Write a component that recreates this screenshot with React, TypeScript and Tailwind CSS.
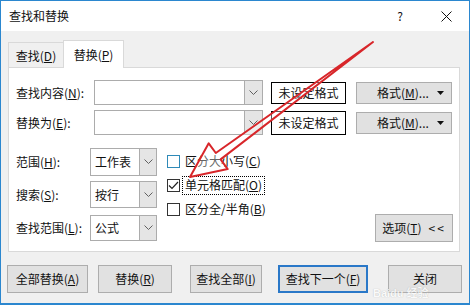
import React from "react";

const font = { fontFamily: '"Noto Sans CJK SC", "Noto Sans", sans-serif' };

function Chevron() {
  return (
    <svg width="9" height="5" viewBox="0 0 9 5">
      <path d="M0.5 0.5 L4.5 4.5 L8.5 0.5" fill="none" stroke="#606060" strokeWidth="1" />
    </svg>
  );
}

function Combo({ width, height, value, btnWidth }: { width: number; height: number; value?: string; btnWidth: number }) {
  return (
    <div
      className="flex border border-[#acacac] bg-white"
      style={{ width, height }}
    >
      <div className="flex-1 flex items-center pl-[4px] text-[12px] text-[#111]">{value}</div>
      <div
        className="flex items-center justify-center bg-[#e5e5e5] border-l border-[#acacac]"
        style={{ width: btnWidth }}
      >
        <Chevron />
      </div>
    </div>
  );
}

function Check({ checked, focus, label, hover }: { checked?: boolean; focus?: boolean; label: React.ReactNode; hover?: boolean }) {
  return (
    <div className="h-[24px] flex items-center">
      <div
        className={`w-[13px] h-[13px] border bg-white flex items-center justify-center ${hover ? "border-[#2f8ab8]" : "border-[#333]"}`}
      >
        {checked && (
          <svg width="11" height="9" viewBox="0 0 11 9">
            <path d="M1 4.5 L4 7.5 L10 1" fill="none" stroke="#222" strokeWidth="1.2" />
          </svg>
        )}
      </div>
      <div
        className={`ml-[2px] h-[19px] flex items-center px-[2px] text-[12px] text-[#111] ${focus ? "border border-dotted border-black" : "border border-transparent"}`}
      >
        {label}
      </div>
    </div>
  );
}

function Btn({ w, children, focus }: { w: number; children: React.ReactNode; focus?: boolean }) {
  return (
    <div
      className={`h-[28px] flex items-center justify-center text-[12px] text-[#111] bg-[#e1e1e1] ${focus ? "border-2 border-[#2a78c8]" : "border border-[#adadad]"}`}
      style={{ width: w }}
    >
      {children}
    </div>
  );
}

function FormatBtn() {
  return (
    <div className="ml-[10px] w-[96px] h-[22px] bg-[#e1e1e1] border border-[#adadad] flex items-center pl-[20px] pr-[7px]">
      <span>格式(<u>M</u>)...</span>
      <svg width="7" height="4" viewBox="0 0 7 4" className="ml-auto">
        <path d="M0 0 L7 0 L3.5 4 Z" fill="#111" />
      </svg>
    </div>
  );
}

export default function App() {
  return (
    <div
      className="relative w-[470px] h-[305px] border border-b-2 border-[#2b87cf] flex flex-col overflow-hidden"
      style={font}
    >
      {/* title bar */}
      <div className="h-[30px] bg-white flex items-center pl-[8px] text-[12px] text-[#111]">
        <span>查找和替换</span>
        <span className="ml-auto mr-[38px] text-[12px]">?</span>
        <svg width="11" height="11" viewBox="0 0 11 11" className="mr-[17px]">
          <path d="M0.5 0.5 L10.5 10.5 M10.5 0.5 L0.5 10.5" stroke="#111" strokeWidth="1" />
        </svg>
      </div>

      <div className="flex-1 bg-[#f0f0f0] pl-[7px] pt-[9px]">
        {/* tabs */}
        <div className="flex items-end h-[28px]">
          <div className="h-[26px] w-[56px] border border-b-0 border-[#d9d9d9] flex items-center justify-center text-[12px] text-[#111]">
            查找(<u>D</u>)
          </div>
          <div className="relative z-10 h-[28px] w-[61px] -ml-px bg-white border border-b-0 border-[#d9d9d9] flex items-center justify-center text-[12px] text-[#111]">
            替换(<u>P</u>)
          </div>
        </div>

        {/* panel */}
        <div className="-mt-px w-[452px] h-[185px] bg-white border border-[#d9d9d9] pl-[7px] pt-[12px] flex flex-col text-[12px] text-[#111]">
          <div className="flex items-center h-[25px]">
            <div className="w-[78px]">查找内容(<u>N</u>):</div>
            <Combo width={169} height={25} btnWidth={18} />
            <div className="ml-[8px] w-[75px] h-[22px] border border-black flex items-center justify-center">未设定格式</div>
            <FormatBtn />
          </div>
          <div className="flex items-center h-[25px] mt-[5px]">
            <div className="w-[78px]">替换为(<u>E</u>):</div>
            <Combo width={169} height={25} btnWidth={18} />
            <div className="ml-[8px] w-[75px] h-[24px] border border-black flex items-center justify-center">未设定格式</div>
            <FormatBtn />
          </div>

          <div className="flex mt-[13px] flex-1">
            <div className="flex flex-col gap-[6px]">
              <div className="flex items-center h-[27px]">
                <div className="w-[74px]">范围(<u>H</u>):</div>
                <Combo width={67} height={28} value="工作表" btnWidth={17} />
              </div>
              <div className="flex items-center h-[27px]">
                <div className="w-[74px]">搜索(<u>S</u>):</div>
                <Combo width={67} height={27} value="按行" btnWidth={17} />
              </div>
              <div className="flex items-center h-[27px]">
                <div className="w-[74px]">查找范围(<u>L</u>):</div>
                <Combo width={67} height={26} value="公式" btnWidth={17} />
              </div>
            </div>

            <div className="ml-[10px] pt-[1px] flex flex-col">
              <Check hover label={<span>区分大小写(<u>C</u>)</span>} />
              <Check checked focus label={<span>单元格匹配(<u>O</u>)</span>} />
              <Check label={<span>区分全/半角(<u>B</u>)</span>} />
            </div>

            <div className="ml-auto mr-[6px] self-end mb-[9px] w-[78px] h-[28px] bg-[#e1e1e1] border border-[#adadad] flex items-center justify-center">
              选项(<u>T</u>)<span className="ml-[7px] tracking-[2px]">&lt;&lt;</span>
            </div>
          </div>
        </div>

        {/* bottom buttons */}
        <div className="flex mt-[13px] -ml-px">
          <Btn w={81}>全部替换(<u>A</u>)</Btn>
          <div className="ml-[10px]">
            <Btn w={74}>替换(<u>R</u>)</Btn>
          </div>
          <div className="ml-[18px]">
            <Btn w={72}>查找全部(<u>I</u>)</Btn>
          </div>
          <div className="ml-[16px]">
            <Btn w={90} focus>查找下一个(<u>F</u>)</Btn>
          </div>
          <div className="ml-[20px]">
            <Btn w={74}>关闭</Btn>
          </div>
        </div>
      </div>

      {/* watermark */}
      <div
        className="absolute left-[372px] top-[287px] text-[11px] font-bold text-white opacity-70 pointer-events-none leading-none"
        style={{ fontFamily: '"Liberation Sans", "Noto Sans CJK SC", sans-serif', textShadow: "0 0 1px #999" }}
      >
        Baidu 经验
      </div>

      {/* red arrow */}
      <svg className="absolute -left-px -top-px pointer-events-none" width="470" height="305" viewBox="0 0 470 305">
        <polygon
          points="373,42 215.8,153 208.7,143.3 190,177 227.7,169.1 220.6,159.4"
          fill="rgba(255,255,255,0.35)"
          stroke="#d8262a"
          strokeWidth="2"
          strokeLinejoin="round"
        />
      </svg>
    </div>
  );
}
